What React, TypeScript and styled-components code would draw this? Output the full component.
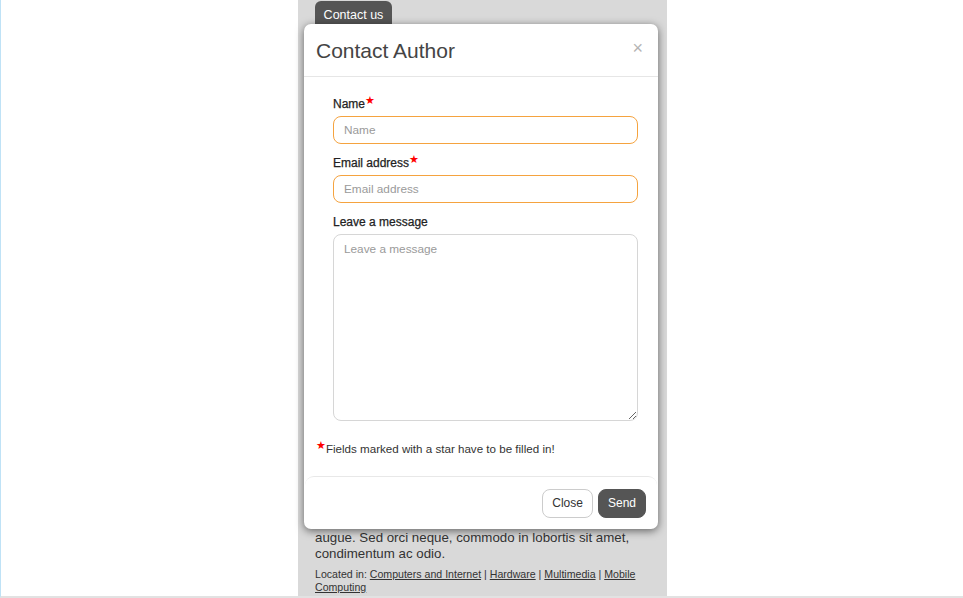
import React from "react";
import styled, { createGlobalStyle } from "styled-components";

const GlobalStyle = createGlobalStyle`
  html, body {
    margin: 0;
    padding: 0;
    background: #ffffff;
    font-family: "Liberation Sans", Arial, sans-serif;
  }
`;

export default function App() {
  return (
    <>
      <GlobalStyle />
      <Page>
        <Column>
          <ContactButton>Contact us</ContactButton>
          <Article>
            <Paragraph>
              augue. Sed orci neque, commodo in lobortis sit amet,
              condimentum ac odio.
            </Paragraph>
            <Located>
              Located in: <CatLink>Computers and Internet</CatLink> |{" "}
              <CatLink>Hardware</CatLink> | <CatLink>Multimedia</CatLink> |{" "}
              <CatLink>Mobile</CatLink> <CatLink>Computing</CatLink>
            </Located>
          </Article>

          <Modal>
            <ModalHeader>
              <Title>Contact Author</Title>
              <CloseX>×</CloseX>
            </ModalHeader>
            <ModalBody>
              <ContactForm>
                <Label>
                  Name<Star>★</Star>
                </Label>
                <TextInput placeholder="Name" $required />
                <Label>
                  Email address<Star>★</Star>
                </Label>
                <TextInput placeholder="Email address" $required />
                <Label>Leave a message</Label>
                <MessageArea placeholder="Leave a message" />
              </ContactForm>
              <Note>
                <Star>★</Star>Fields marked with a star have to be filled in!
              </Note>
            </ModalBody>
            <ModalFooter>
              <Button>Close</Button>
              <Button $primary>Send</Button>
            </ModalFooter>
          </Modal>
        </Column>
      </Page>
    </>
  );
}

const Page = styled.div`
  box-sizing: border-box;
  height: 598px;
  display: flex;
  justify-content: center;
  border-left: 1px solid #bfe2f6;
  border-bottom: 2px solid #e2e2e2;
  overflow: hidden;
`;

const Column = styled.div`
  position: relative;
  box-sizing: border-box;
  width: 369px;
  margin-left: 1px;
  padding: 1px 17px 2px 17px;
  background: #d9d9d9;
  display: flex;
  flex-direction: column;
  justify-content: space-between;
`;

const ContactButton = styled.button`
  align-self: flex-start;
  width: 77px;
  height: 32px;
  padding: 7px 0 0 0;
  border: none;
  border-radius: 6px;
  background: #555555;
  color: #ffffff;
  font-family: "Liberation Sans", Arial, sans-serif;
  font-size: 12.5px;
  display: flex;
  align-items: flex-start;
  justify-content: center;
`;

const Article = styled.div`
  color: #333333;
`;

const Paragraph = styled.p`
  margin: 0 0 6px 0;
  font-size: 13.3px;
  line-height: 16px;
`;

const Located = styled.p`
  margin: 0;
  font-size: 10.6px;
  line-height: 13px;
`;

const CatLink = styled.span`
  text-decoration: underline;
  color: #333333;
`;

const Modal = styled.div`
  position: absolute;
  top: 24px;
  left: 6px;
  width: 354px;
  height: 505px;
  box-sizing: border-box;
  background: #ffffff;
  border-radius: 7px;
  box-shadow: 0 2px 9px rgba(0, 0, 0, 0.55);
  display: flex;
  flex-direction: column;
`;

const ModalHeader = styled.div`
  height: 53px;
  box-sizing: border-box;
  padding: 0 15px 0 12px;
  display: flex;
  align-items: center;
  justify-content: space-between;
  border-bottom: 1px solid #e6e6e6;
`;

const Title = styled.h4`
  margin: 2px 0 0 0;
  font-size: 21px;
  font-weight: normal;
  color: #444444;
`;

const CloseX = styled.span`
  font-size: 18px;
  color: #b4b4b4;
  margin-top: -4px;
`;

const ModalBody = styled.div`
  flex: 1;
  padding: 19px 12px 0 12px;
`;

const ContactForm = styled.div`
  display: flex;
  flex-direction: column;
  margin: 0 8px 0 17px;
`;

const Label = styled.label`
  display: block;
  font-size: 12px;
  line-height: 16px;
  color: #222222;
  margin-bottom: 4px;
  -webkit-text-stroke: 0.25px #222222;
`;

const Star = styled.span`
  color: #ff0000;
  font-family: "DejaVu Sans", sans-serif;
  font-size: 11px;
  line-height: 0;
  vertical-align: 4px;
  -webkit-text-stroke: 0;
`;

const TextInput = styled.input<{ $required?: boolean }>`
  box-sizing: border-box;
  height: 28px;
  margin-bottom: 11px;
  padding: 0 10px;
  border: 1.5px solid ${(p) => (p.$required ? "#f5a33f" : "#dddddd")};
  border-radius: 8px;
  outline: none;
  font-family: "Liberation Sans", Arial, sans-serif;
  font-size: 11.8px;
  color: #333333;
  &::placeholder {
    color: #9a9a9a;
  }
`;

const MessageArea = styled.textarea`
  box-sizing: border-box;
  height: 187px;
  padding: 7px 10px;
  border: 1.5px solid #d6d6d6;
  border-radius: 8px;
  outline: none;
  font-family: "Liberation Sans", Arial, sans-serif;
  font-size: 11.8px;
  &::placeholder {
    color: #9a9a9a;
  }
`;

const Note = styled.p`
  margin: 20px 0 0 0;
  font-size: 11.6px;
  line-height: 16px;
  color: #333333;
`;

const ModalFooter = styled.div`
  height: 53px;
  box-sizing: border-box;
  margin: 0 1px;
  padding: 0 11px;
  display: flex;
  align-items: center;
  justify-content: flex-end;
  gap: 5px;
  border-top: 1px solid #e8e8e8;
  border-radius: 9px 9px 0 0;
`;

const Button = styled.button<{ $primary?: boolean }>`
  height: 29px;
  padding: 0 ${(p) => (p.$primary ? "9px" : "9px")};
  border-radius: 8px;
  border: 1px solid ${(p) => (p.$primary ? "#555555" : "#cccccc")};
  background: ${(p) => (p.$primary ? "#555555" : "#ffffff")};
  color: ${(p) => (p.$primary ? "#ffffff" : "#333333")};
  font-family: "Liberation Sans", Arial, sans-serif;
  font-size: 12px;
`;
